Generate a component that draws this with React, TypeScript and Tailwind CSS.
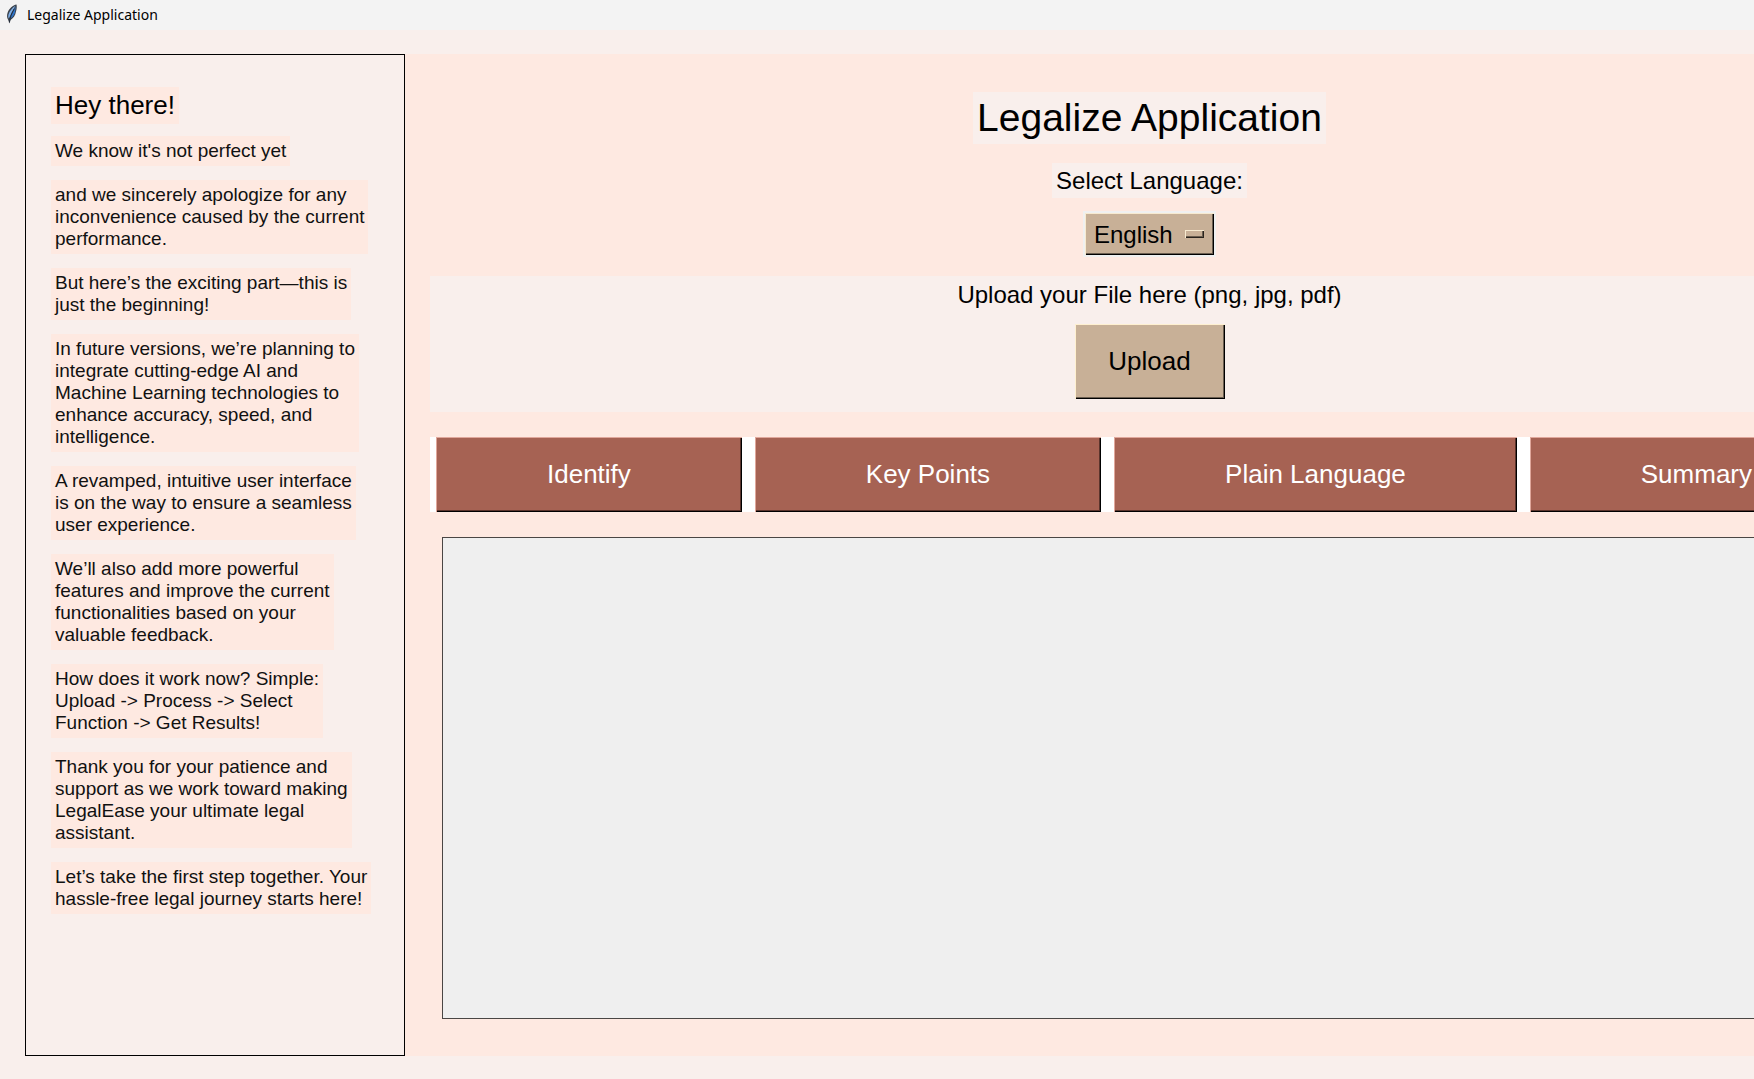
const notes: string[] = [
  "We know it's not perfect yet",
  'and we sincerely apologize for any\ninconvenience caused by the current\nperformance.',
  'But here’s the exciting part—this is\njust the beginning!',
  'In future versions, we’re planning to\nintegrate cutting-edge AI and\nMachine Learning technologies to\nenhance accuracy, speed, and\nintelligence.',
  'A revamped, intuitive user interface\nis on the way to ensure a seamless\nuser experience.',
  'We’ll also add more powerful\nfeatures and improve the current\nfunctionalities based on your\nvaluable feedback.',
  'How does it work now? Simple:\nUpload -> Process -> Select\nFunction -> Get Results!',
  'Thank you for your patience and\nsupport as we work toward making\nLegalEase your ultimate legal\nassistant.',
  'Let’s take the first step together. Your\nhassle-free legal journey starts here!',
];

const actions: string[] = ['Identify', 'Key Points', 'Plain Language', 'Summary'];

function FeatherIcon() {
  return (
    <svg width="12" height="20" viewBox="0 0 12 20" aria-hidden="true">
      <path d="M10.500 0.500C7 1 3 4.500 1.500 9C0.700 11.500 1 14 2 15.500L3.500 19.500L4.500 16C7 14.500 9.500 11.500 10 7.500C10.800 5 11 2.500 10.500 0.500Z" fill="#3a424c" />
      <path d="M9.500 1.800C6.500 3.500 3.700 7 2.500 10.500C2 12.500 2.300 14 2.800 14.500C4.500 11 6.500 6.500 9.500 1.800Z" fill="#7fb0e8" />
      <path d="M9.800 2.500C9.500 5 9.200 7 8.800 9C8 11.500 6 13.800 4 14.800C5 11.500 7.500 6.500 9.800 2.500Z" fill="#2f74c8" />
      <path d="M8.200 5C5.800 9 4.200 13 3.400 18.500" fill="none" stroke="#16202c" strokeWidth="0.700" />
    </svg>
  );
}

function Sidebar() {
  return (
    <aside className="flex w-[380px] shrink-0 flex-col items-start gap-3 border border-black bg-[#f9efec] px-[25px] pt-8">
      <h2 className="bg-[#fee9e1] px-1 py-1 text-[26px] leading-[29px] text-black">Hey there!</h2>
      <div className="flex flex-col items-start gap-3.5">
        {notes.map((note) => (
          <p key={note} className="bg-[#fee9e1] px-1 py-1 text-[19px] leading-[22px] whitespace-pre text-[#111]">
            {note}
          </p>
        ))}
      </div>
    </aside>
  );
}

function LanguagePicker() {
  return (
    <>
      <label htmlFor="language" className="mt-[19px] bg-[#f9efec] px-1 py-1 text-[24px] leading-[27px] text-black">
        Select Language:
      </label>
      <div className="relative mt-[13px] border-2 border-[#f0f0f0]">
        <select
          id="language"
          defaultValue="English"
          className="block h-[42px] w-[129px] appearance-none rounded-none bg-[#c8b097] pt-0.5 pl-[9px] text-[24px] text-black shadow-[inset_1px_1px_#f7ead0,inset_-1px_-1px_#000,inset_-2px_-2px_#6b5e50] outline-none"
        >
          <option>English</option>
        </select>
        <span className="pointer-events-none absolute top-[17px] right-2.5 h-2 w-[19px] bg-[#c8b097] shadow-[inset_1px_1px_#f7ead0,inset_-1px_-1px_#2a241e,inset_-2px_-2px_#6b5e50]" />
      </div>
    </>
  );
}

function UploadPanel() {
  return (
    <section className="mt-[19px] flex flex-col items-center self-stretch bg-[#f9efec] px-3 pt-1 pb-[13px]">
      <p className="text-[24px] leading-[30px] text-black">Upload your File here (png, jpg, pdf)</p>
      <button
        type="button"
        className="mt-3.5 h-[75px] w-[150px] bg-[#c8b097] text-[26px] text-black shadow-[inset_1px_1px_#fff0d0,inset_-1px_-1px_#000,inset_-2px_-2px_#6b5e50]"
      >
        Upload
      </button>
    </section>
  );
}

function ActionBar() {
  return (
    <div className="mt-[25px] flex gap-[13px] self-stretch bg-white px-1.5">
      {actions.map((action) => (
        <button
          key={action}
          type="button"
          className="h-[75px] flex-auto bg-[#a66253] text-[26px] whitespace-nowrap text-white shadow-[inset_1px_1px_#e0a79b,inset_-1px_-1px_#000,inset_-2px_-2px_#5a342c]"
        >
          {action}
        </button>
      ))}
    </div>
  );
}

export default function App() {
  return (
    <div className="flex min-h-screen flex-col overflow-hidden bg-[#f9efec] font-['Liberation_Sans',Arial,sans-serif]">
      <header className="flex h-[30px] shrink-0 items-center gap-[9px] bg-[#f3f3f3] pb-0.5 pl-1.5">
        <FeatherIcon />
        <span className="font-['Noto_Sans',sans-serif] text-[14px] text-black">Legalize Application</span>
      </header>
      <div className="flex flex-1 pt-6 pb-[23px] pl-[25px]">
        <Sidebar />
        <main className="-mr-[140px] flex flex-1 flex-col items-center bg-[#fee9e1] px-[25px] pt-[38px] pb-[37px]">
          <h1 className="bg-[#f9efec] px-1 py-1 text-[39px] leading-[44px] text-black">Legalize Application</h1>
          <LanguagePicker />
          <UploadPanel />
          <ActionBar />
          <div className="mt-[25px] flex flex-1 self-stretch px-3">
            <textarea
              aria-label="Result"
              className="min-h-40 flex-1 resize-none border border-[#4a4644] bg-[#efefef] p-2 text-[19px] outline-none"
            />
          </div>
        </main>
      </div>
    </div>
  );
}
